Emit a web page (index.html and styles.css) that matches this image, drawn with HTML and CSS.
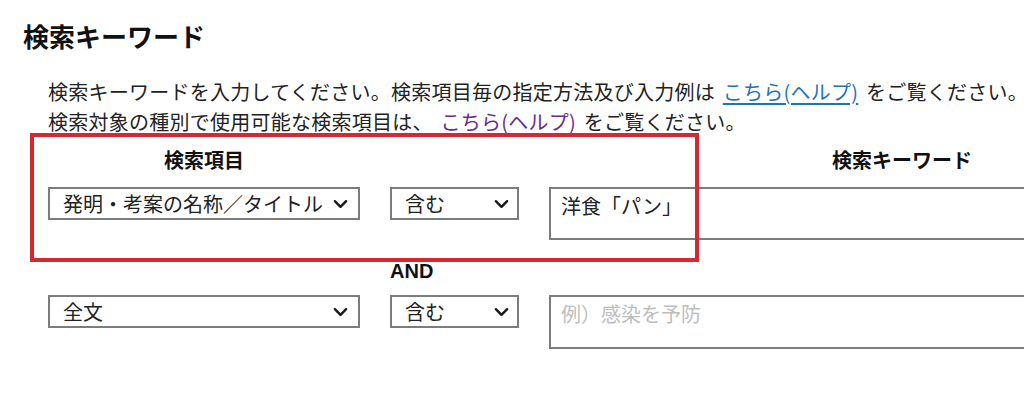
FILE: index.html
```html
<!DOCTYPE html>
<html lang="ja">
<head>
<meta charset="utf-8">
<link rel="stylesheet" href="styles.css">
</head>
<body>
<h2 class="title">検索キーワード</h2>
<p class="intro">検索キーワードを入力してください。検索項目毎の指定方法及び入力例は <a class="help" href="#">こちら(ヘルプ)</a> をご覧ください。<br>検索対象の種別で使用可能な検索項目は、 <a class="help visited" href="#">こちら(ヘルプ)</a> をご覧ください。</p>
<div class="search">
  <div class="head">検索項目</div>
  <div class="head"></div>
  <div class="head">検索キーワード</div>

  <div class="sel wide"><span>発明・考案の名称／タイトル</span><svg class="chev" viewBox="0 0 16 10" width="15" height="10"><polyline points="2,2 8,8 14,2"/></svg></div>
  <div class="sel narrow"><span>含む</span><svg class="chev" viewBox="0 0 16 10" width="15" height="10"><polyline points="2,2 8,8 14,2"/></svg></div>
  <div class="kw">洋食「パン」</div>

  <div class="op"></div>
  <div class="op and">AND</div>
  <div class="op"></div>

  <div class="sel wide"><span>全文</span><svg class="chev" viewBox="0 0 16 10" width="15" height="10"><polyline points="2,2 8,8 14,2"/></svg></div>
  <div class="sel narrow"><span>含む</span><svg class="chev" viewBox="0 0 16 10" width="15" height="10"><polyline points="2,2 8,8 14,2"/></svg></div>
  <div class="kw placeholder">例）感染を予防</div>

  <div class="highlight"></div>
</div>
</body>
</html>
```
FILE: styles.css
```css
html, body {
  margin: 0;
  padding: 0;
  background: #fff;
  overflow: hidden;
}
body {
  font-family: "Noto Sans CJK JP", "Noto Sans", sans-serif;
  color: #222;
  width: 1024px;
}
.title {
  margin: 18px 0 0 23px;
  font-size: 26px;
  line-height: 36px;
  font-weight: 700;
  color: #111;
}
.intro {
  margin: 23px 0 4px 48px;
  font-size: 20px;
  line-height: 30px;
  white-space: nowrap;
  word-spacing: 3px;
  letter-spacing: 0.25px;
}
.help {
  color: #1f74b5;
  text-decoration: underline;
  text-underline-offset: 3px;
}
.help.visited {
  color: #6b2a8c;
}
.search {
  position: relative;
  margin-left: 48px;
  display: grid;
  grid-template-columns: 312px 129px 706px;
  column-gap: 30px;
  align-items: start;
}
.head {
  font-size: 20px;
  font-weight: 700;
  line-height: 28px;
  text-align: center;
  color: #111;
  margin-top: 5px;
  margin-bottom: 13px;
}
.sel {
  box-sizing: border-box;
  height: 33px;
  border: 2px solid #7c7c7c;
  display: flex;
  align-items: center;
  justify-content: space-between;
  font-size: 20px;
  color: #222;
  background: #fff;
}
.sel.wide {
  padding: 0 10px 0 13px;
}
.sel.narrow {
  padding: 0 8px 0 13px;
}
.chev {
  flex: none;
}
.chev polyline {
  fill: none;
  stroke: #1a1a1a;
  stroke-width: 2.6;
  stroke-linecap: round;
  stroke-linejoin: round;
}
.kw {
  box-sizing: border-box;
  height: 53px;
  border: 2px solid #7c7c7c;
  padding: 3px 10px;
  font-size: 20px;
  line-height: 28px;
  color: #222;
  background: #fff;
}
.kw.placeholder {
  color: #bdbdbd;
  height: 54px;
}
.op {
  height: 55px;
}
.and {
  font-family: "Liberation Sans", "Noto Sans", sans-serif;
  font-size: 20px;
  font-weight: 700;
  line-height: 24px;
  padding-top: 19px;
  height: 36px;
  color: #111;
}
.highlight {
  position: absolute;
  left: -18px;
  top: -8px;
  width: 669px;
  height: 129px;
  box-sizing: border-box;
  border: 4px solid #d52832;
  pointer-events: none;
}
```
